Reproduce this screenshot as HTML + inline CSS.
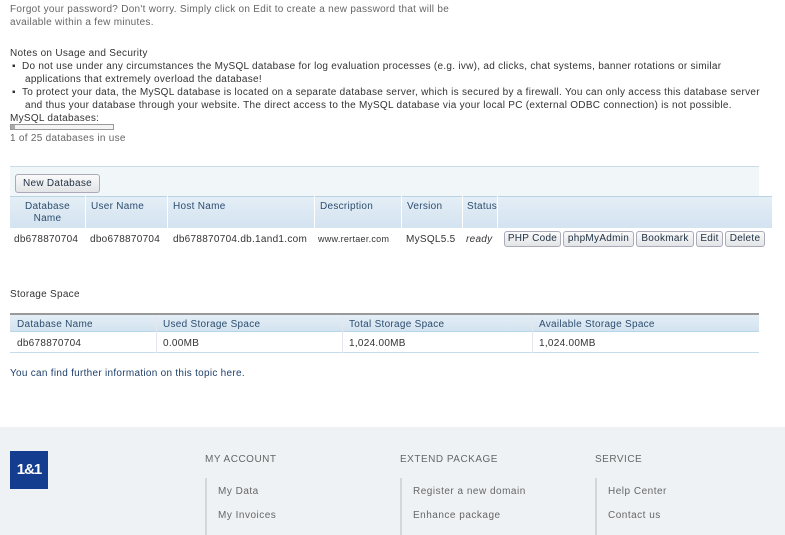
<!DOCTYPE html>
<html><head><meta charset="utf-8"><style>
*{margin:0;padding:0;box-sizing:border-box}
body{width:785px;height:535px;overflow:hidden;background:#fff;font-family:"Liberation Sans",sans-serif;font-size:10px;color:#333;position:relative;letter-spacing:0.28px}
.a{position:absolute;white-space:nowrap}
.t{margin-top:1px}
.g{color:#666}
.th{position:absolute;background:linear-gradient(#e4eef6,#d3e3f0);color:#2d4d6e}
.btn{position:absolute;border:1px solid #aab;border-radius:3px;background:linear-gradient(#fafafa,#e2e4e6);color:#234;text-align:center;height:16px;line-height:14px;font-size:10px}
.vl{position:absolute;width:1px;background:#fff}
.ft{color:#666;font-size:10px;letter-spacing:0.5px}
</style></head><body>
<div class="a t g" style="left:10px;top:2px;line-height:13px">Forgot your password? Don't worry. Simply click on Edit to create a new password that will be<br>available within a few minutes.</div>
<div class="a t" style="left:10px;top:46px;line-height:13px">Notes on Usage and Security</div>
<div class="a t" style="left:12px;top:59px;line-height:13px">▪&nbsp;&nbsp;Do not use under any circumstances the MySQL database for log evaluation processes (e.g. ivw), ad clicks, chat systems, banner rotations or similar</div>
<div class="a t" style="left:25px;top:72px;line-height:13px">applications that extremely overload the database!</div>
<div class="a t" style="left:12px;top:85px;line-height:13px">▪&nbsp;&nbsp;To protect your data, the MySQL database is located on a separate database server, which is secured by a firewall. You can only access this database server</div>
<div class="a t" style="left:25px;top:98px;line-height:13px">and thus your database through your website. The direct access to the MySQL database via your local PC (external ODBC connection) is not possible.</div>
<div class="a t" style="left:10px;top:111px;line-height:13px">MySQL databases:</div>
<div class="a" style="left:10px;top:124px;width:104px;height:6px;border:1px solid #999;background:#f4f4f4"><div style="width:4px;height:4px;background:#aaa"></div></div>
<div class="a t g" style="left:10px;top:131px;line-height:13px">1 of 25 databases in use</div>

<div class="a" style="left:10px;top:166px;width:749px;height:30px;background:#f1f6f9;border-top:1px solid #c8dce8"></div>
<div class="btn" style="left:15px;top:174px;width:85px;height:19px;line-height:17px">New Database</div>
<div class="th" style="left:10px;top:196px;width:762px;height:32px;border-top:1px solid #b9d2e4"></div>
<div class="vl" style="left:85px;top:196px;height:66px"></div>
<div class="vl" style="left:167px;top:196px;height:66px"></div>
<div class="vl" style="left:314px;top:196px;height:66px"></div>
<div class="vl" style="left:401px;top:196px;height:66px"></div>
<div class="vl" style="left:462px;top:196px;height:66px"></div>
<div class="vl" style="left:497px;top:196px;height:66px"></div>
<div class="a t" style="left:10px;top:200px;width:75px;text-align:center;line-height:12px;color:#2d4d6e">Database<br>Name</div>
<div class="a t" style="left:91px;top:200px;color:#2d4d6e">User Name</div>
<div class="a t" style="left:173px;top:200px;color:#2d4d6e">Host Name</div>
<div class="a t" style="left:320px;top:200px;color:#2d4d6e">Description</div>
<div class="a t" style="left:407px;top:200px;color:#2d4d6e">Version</div>
<div class="a t" style="left:467px;top:200px;color:#2d4d6e">Status</div>
<div class="a t" style="left:14px;top:233px">db678870704</div>
<div class="a t" style="left:90px;top:233px">dbo678870704</div>
<div class="a t" style="left:173px;top:233px">db678870704.db.1and1.com</div>
<div class="a t" style="left:318px;top:233px;font-size:9px">www.rertaer.com</div>
<div class="a t" style="left:406px;top:233px">MySQL5.5</div>
<div class="a t" style="left:466px;top:233px;font-style:italic">ready</div>
<div class="btn" style="left:504px;top:231px;width:57px">PHP Code</div>
<div class="btn" style="left:563px;top:231px;width:71px">phpMyAdmin</div>
<div class="btn" style="left:636px;top:231px;width:58px">Bookmark</div>
<div class="btn" style="left:696px;top:231px;width:27px">Edit</div>
<div class="btn" style="left:725px;top:231px;width:40px">Delete</div>

<div class="a t" style="left:10px;top:288px">Storage Space</div>
<div class="th" style="left:10px;top:313px;width:749px;height:19px;border-top:2px solid #999;border-bottom:1px solid #b8d6ea"></div>
<div class="a" style="left:10px;top:332px;width:749px;height:21px;border-bottom:1px solid #c5dcec"></div>
<div class="vl" style="left:156px;top:315px;height:38px;background:#e4e8ec"></div>
<div class="vl" style="left:342px;top:315px;height:38px;background:#e4e8ec"></div>
<div class="vl" style="left:532px;top:315px;height:38px;background:#e4e8ec"></div>
<div class="a t" style="left:17px;top:318px;color:#2d4d6e">Database Name</div>
<div class="a t" style="left:163px;top:318px;color:#2d4d6e">Used Storage Space</div>
<div class="a t" style="left:349px;top:318px;color:#2d4d6e">Total Storage Space</div>
<div class="a t" style="left:539px;top:318px;color:#2d4d6e">Available Storage Space</div>
<div class="a t" style="left:17px;top:337px">db678870704</div>
<div class="a t" style="left:163px;top:337px">0.00MB</div>
<div class="a t" style="left:349px;top:337px">1,024.00MB</div>
<div class="a t" style="left:539px;top:337px">1,024.00MB</div>
<div class="a t" style="left:10px;top:367px;color:#1f3f6a">You can find further information on this topic here.</div>

<div class="a" style="left:0;top:427px;width:785px;height:108px;background:#eff2f5"></div>
<div class="a" style="left:10px;top:451px;width:38px;height:38px;background:#143d8f;color:#fff;font-weight:bold;font-size:15px;line-height:38px;text-align:center;letter-spacing:-1px">1&amp;1</div>
<div class="a t ft" style="left:205px;top:453px">MY ACCOUNT</div>
<div class="a t ft" style="left:400px;top:453px">EXTEND PACKAGE</div>
<div class="a t ft" style="left:595px;top:453px">SERVICE</div>
<div class="a" style="left:205px;top:478px;width:2px;height:57px;background:#d4d6d8"></div>
<div class="a" style="left:400px;top:478px;width:2px;height:57px;background:#d4d6d8"></div>
<div class="a" style="left:595px;top:478px;width:2px;height:57px;background:#d4d6d8"></div>
<div class="a t ft" style="left:218px;top:485px">My Data</div>
<div class="a t ft" style="left:218px;top:509px">My Invoices</div>
<div class="a t ft" style="left:413px;top:485px">Register a new domain</div>
<div class="a t ft" style="left:413px;top:509px">Enhance package</div>
<div class="a t ft" style="left:608px;top:485px">Help Center</div>
<div class="a t ft" style="left:608px;top:509px">Contact us</div>
</body></html>
